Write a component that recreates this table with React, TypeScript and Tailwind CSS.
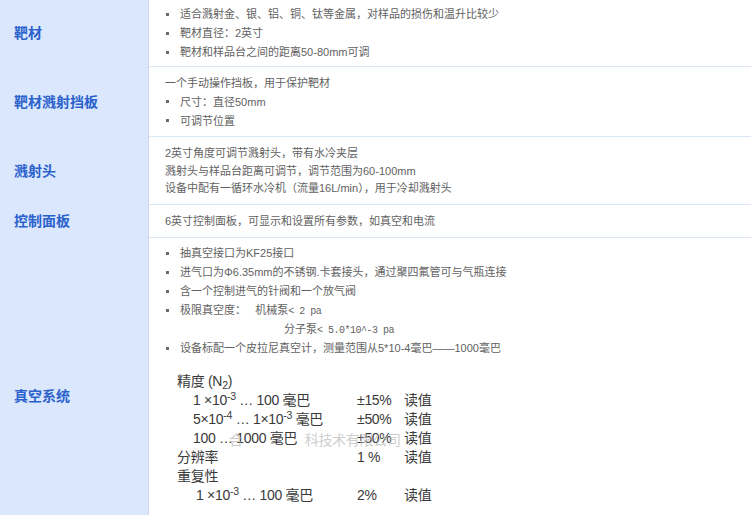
import React from "react";

const Bullet = ({ children }: { children: React.ReactNode }) => (
  <div className="flex h-[19px] items-center">
    <span className="ml-[1px] mr-[11px] h-[3px] w-[3px] shrink-0 bg-[#6b6b6b]" />
    <span>{children}</span>
  </div>
);

const Mono = ({ children }: { children: React.ReactNode }) => (
  <span
    className="text-[10px] leading-[19px] tracking-[-0.5px]"
    style={{ fontFamily: '"Liberation Mono", monospace' }}
  >
    {children}
  </span>
);

const Row = ({
  label,
  children,
  className,
}: {
  label: string;
  children: React.ReactNode;
  className: string;
}) => (
  <div className="flex">
    <div className="flex w-[149px] shrink-0 items-center border-r border-dotted border-[#c4cbd6] bg-[#dae7fd] pl-[14px] text-[14px] font-bold text-[#2b62cc]">
      {label}
    </div>
    <div className={"flex-1 border-b border-[#dbe6fa] pl-[16px] text-[11px] text-[#626262] " + className}>
      {children}
    </div>
  </div>
);

export default function App() {
  return (
    <div
      className="h-[515px] w-[751px] overflow-hidden bg-white"
      style={{ fontFamily: '"Liberation Sans", "Noto Sans CJK SC", sans-serif' }}
    >
      <Row label="靶材" className="h-[67px] pt-[5px] leading-[19px]">
        <Bullet>适合溅射金、银、铝、铜、钛等金属，对样品的损伤和温升比较少</Bullet>
        <Bullet>靶材直径：2英寸</Bullet>
        <Bullet>靶材和样品台之间的距离50-80mm可调</Bullet>
      </Row>
      <Row label="靶材溅射挡板" className="h-[70px] pt-[7px] leading-[18px]">
        <div>一个手动操作挡板，用于保护靶材</div>
        <Bullet>尺寸：直径50mm</Bullet>
        <Bullet>可调节位置</Bullet>
      </Row>
      <Row label="溅射头" className="h-[68px] pt-[8px] leading-[17.5px]">
        <div>2英寸角度可调节溅射头，带有水冷夹层</div>
        <div>溅射头与样品台距离可调节，调节范围为60-100mm</div>
        <div>设备中配有一循环水冷机（流量16L/min），用于冷却溅射头</div>
      </Row>
      <Row label="控制面板" className="h-[33px] pt-[7px] leading-[18px]">
        <div>6英寸控制面板，可显示和设置所有参数，如真空和电流</div>
      </Row>
      <Row label="真空系统" className="h-[317px] pt-[6px] leading-[19px]">
        <Bullet>抽真空接口为KF25接口</Bullet>
        <Bullet>进气口为Φ6.35mm的不锈钢.卡套接头，通过聚四氟管可与气瓶连接</Bullet>
        <Bullet>含一个控制进气的针阀和一个放气阀</Bullet>
        <Bullet>
          极限真空度：&nbsp;&nbsp;&nbsp;机械泵<Mono>&lt; 2 pa</Mono>
        </Bullet>
        <div className="h-[19px] pl-[119px]">
          分子泵<Mono>&lt; 5.0*10^-3 pa</Mono>
        </div>
        <Bullet>设备标配一个皮拉尼真空计，测量范围从5*10-4毫巴——1000毫巴</Bullet>

        <div className="relative mt-[14px] ml-[12px] grid grid-cols-[180px_47px_auto] text-[14px] leading-[19px] tracking-[-0.3px] text-[#3a3a3a]">
          <div className="col-span-3">
            精度 (N<sub>2</sub>)
          </div>
          <div className="pl-[16px]">
            1 ×10<sup>-3</sup> … 100 毫巴
          </div>
          <div>±15%</div>
          <div>读值</div>
          <div className="pl-[16px]">
            5×10<sup>-4</sup> … 1×10<sup>-3</sup> 毫巴
          </div>
          <div>±50%</div>
          <div>读值</div>
          <div className="pl-[16px]">100 … 1000 毫巴</div>
          <div>±50%</div>
          <div>读值</div>
          <div>分辨率</div>
          <div>1 %</div>
          <div>读值</div>
          <div className="col-span-3">重复性</div>
          <div className="pl-[19px]">
            1 ×10<sup>-3</sup> … 100 毫巴
          </div>
          <div>2%</div>
          <div>读值</div>
          <div className="pointer-events-none absolute left-[52px] top-[59px] text-[14px] text-[#b9b9b9] opacity-70">
            合<span className="ml-[62px]">科技术有限公司</span>
          </div>
        </div>
      </Row>
    </div>
  );
}
